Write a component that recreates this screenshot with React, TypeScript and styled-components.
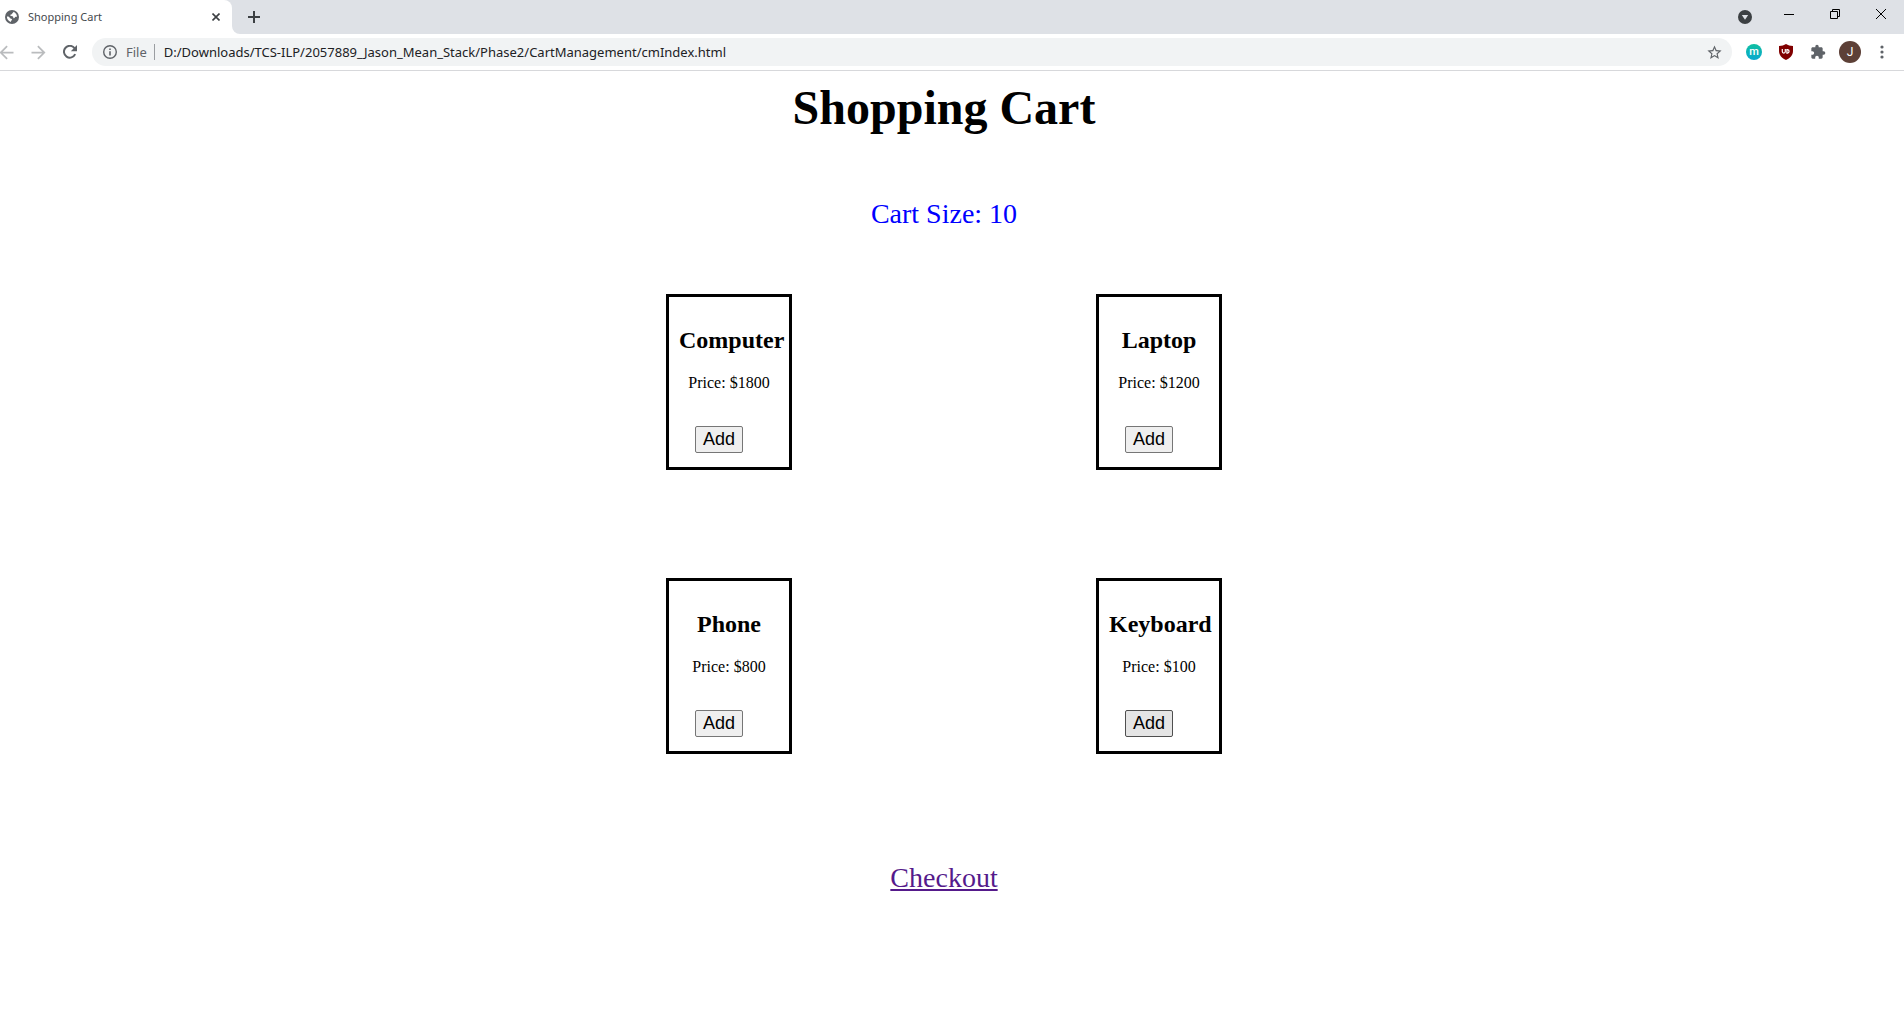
import React, { useState } from "react";
import styled, { createGlobalStyle } from "styled-components";
import { MdArrowBack, MdArrowForward, MdStarBorder, MdExtension } from "react-icons/md";

const GlobalStyle = createGlobalStyle`
  *, *::before, *::after { box-sizing: border-box; }
  body {
    margin: 0;
    background: #fff;
    color: #000;
    font-family: "Liberation Serif", "Times New Roman", serif;
    font-size: 16px;
    overflow-x: hidden;
  }
`;

const uiFont = `"Noto Sans", "Segoe UI", sans-serif`;

const Chrome = styled.header`
  font-family: ${uiFont};
  border-bottom: 1px solid #d7d8db;
  overflow: hidden;
`;

const TabStrip = styled.div`
  display: flex;
  height: 34px;
`;

const TabSlot = styled.div`
  width: 232px;
  background: #dee1e6;
`;

const Tab = styled.div`
  display: flex;
  align-items: center;
  height: 100%;
  padding: 0 8px 0 5px;
  background: #fff;
  border-top-right-radius: 8px;
  color: #45494d;
  font-size: 11px;
`;

const TabTitle = styled.span`
  flex: 1;
  padding: 0 0 1px 9px;
`;

const StripRest = styled.div`
  display: flex;
  flex: 1;
  padding-left: 6px;
  background: #dee1e6;
  border-bottom-left-radius: 8px;
`;

const WindowControls = styled.div`
  display: flex;
  margin-left: auto;
`;

const IconButton = styled.button<{ $w?: number; $h?: number; $color?: string }>`
  display: flex;
  flex: none;
  align-items: center;
  justify-content: center;
  width: ${(p) => p.$w ?? 32}px;
  height: ${(p) => p.$h ?? 36}px;
  padding: 0;
  border: 0;
  background: none;
  color: ${(p) => p.$color ?? "#5f6368"};
`;

const Toolbar = styled.div`
  display: flex;
  align-items: center;
  gap: 6px;
  height: 36px;
  padding-right: 6px;
`;

const ButtonGroup = styled.div<{ $bleed?: boolean }>`
  display: flex;
  margin-left: ${(p) => (p.$bleed ? "-10px" : "0")};
`;

const Omnibox = styled.div`
  display: flex;
  flex: 1;
  align-items: center;
  height: 28px;
  padding: 0 2px 0 11px;
  border-radius: 14px;
  background: #f1f3f4;
  color: #5f6368;
  font-size: 13px;
`;

const Scheme = styled.label`
  padding: 0 7px 0 9px;
  border-right: 1px solid #9a9da1;
  line-height: 16px;
`;

const Address = styled.input`
  flex: 1;
  min-width: 0;
  padding: 0 0 0 9px;
  border: 0;
  outline: 0;
  background: none;
  color: #202124;
  font: inherit;
`;

const Avatar = styled.span`
  display: flex;
  align-items: center;
  justify-content: center;
  width: 22px;
  height: 22px;
  border-radius: 50%;
  background: #5d4037;
  color: #fff;
  font: 12px Roboto, sans-serif;
`;

const MBadge = styled.span`
  display: flex;
  align-items: center;
  justify-content: center;
  width: 16px;
  height: 16px;
  border-radius: 50%;
  background: linear-gradient(#0fbfa0, #0aa9cf);
  color: #fff;
  font: 500 11px/14px Roboto, sans-serif;
`;

const Page = styled.main`
  display: flex;
  flex-direction: column;
  align-items: center;
  padding: 9px 24px 32px 8px;
`;

const Title = styled.h1`
  margin: 0 0 63px;
  font-size: 48px;
  line-height: 55px;
`;

const CartSize = styled.p`
  margin: 0 0 64px;
  color: #00f;
  font-size: 28px;
  line-height: 32px;
`;

const Products = styled.div`
  display: grid;
  grid-template-columns: auto auto;
  gap: 108px 304px;
  margin-bottom: 108px;
`;

const Card = styled.section`
  width: 126px;
  padding: 10px;
  border: 3px solid #000;
  text-align: center;
`;

const Name = styled.h2`
  margin: 20px 0;
  font-size: 24px;
  line-height: 27px;
`;

const Price = styled.p`
  margin: 0;
  line-height: 18px;
`;

const AddButton = styled.button<{ $active?: boolean }>`
  display: block;
  width: 48px;
  height: 27px;
  margin: 34px 0 4px 16px;
  padding: 0;
  border: 1px solid ${(p) => (p.$active ? "#4f4f4f" : "#767676")};
  border-radius: 2px;
  background: ${(p) => (p.$active ? "#e5e5e5" : "#efefef")};
  color: #000;
  font: 18px/21px "Liberation Sans", Arial, sans-serif;
`;

const Checkout = styled.a`
  color: #551a8b;
  font-size: 28px;
  line-height: 32px;
`;

const Globe = () => (
  <svg width="14" height="14" viewBox="0 0 14 14" aria-hidden="true">
    <circle cx="7" cy="7" r="7" fill="#5f6368" />
    <path
      d="M8.300 1.800C8.600 3 7.300 2.900 7.100 3.700C6.900 4.500 5.200 4.100 5.200 5.200C5.200 6.200 7.500 5.800 8 6.600C8.400 7.400 8 8.300 9 8.200C10.200 8 9.600 6.900 10.700 6.800H12C12 4.500 10.400 2.600 8.300 1.800ZM1.900 6.600C1.800 9 3.300 11.200 5.800 12C5.900 10.800 7 10.500 7 9.600C7 8.500 5.600 8.700 5 8.200C4.300 7.500 4.200 6.600 3.200 6.600Z"
      fill="#fff"
    />
  </svg>
);

const ReloadIcon = () => (
  <svg width="14" height="14" viewBox="0 0 14 14" fill="none" aria-hidden="true">
    <path d="M12.200 9.200A5.900 5.900 0 1 1 11.500 3.100" stroke="currentColor" strokeWidth="2" />
    <path d="M14 0V6.200H7.800z" fill="currentColor" />
  </svg>
);

const InfoIcon = () => (
  <svg width="14" height="14" viewBox="0 0 14 14" fill="none" aria-hidden="true">
    <circle cx="7" cy="7" r="6.300" stroke="currentColor" strokeWidth="1.400" />
    <path d="M7 6.200v4.300M7 3.500v1.500" stroke="currentColor" strokeWidth="1.600" />
  </svg>
);

const MenuIcon = () => (
  <svg width="4" height="14" viewBox="0 0 4 14" fill="currentColor" aria-hidden="true">
    <circle cx="2" cy="2" r="1.600" />
    <circle cx="2" cy="7" r="1.600" />
    <circle cx="2" cy="12" r="1.600" />
  </svg>
);

const CloseTabIcon = () => (
  <svg width="8" height="8" viewBox="0 0 8 8" aria-hidden="true">
    <path d="M.5.5l7 7M7.500.5l-7 7" stroke="#3c4043" strokeWidth="1.600" />
  </svg>
);

const PlusIcon = () => (
  <svg width="12" height="12" viewBox="0 0 12 12" aria-hidden="true">
    <path d="M6 0v12M0 6h12" stroke="#3c4043" strokeWidth="2" />
  </svg>
);

const SearchTabsIcon = () => (
  <svg width="14" height="14" viewBox="0 0 14 14" aria-hidden="true">
    <circle cx="7" cy="7" r="7" fill="#3c4043" />
    <path d="M3.800 5h6.400L7 9.800z" fill="#dee1e6" />
  </svg>
);

const MinimizeIcon = () => (
  <svg width="10" height="10" viewBox="0 0 10 10" aria-hidden="true">
    <path d="M0 5.500h10" stroke="#000" />
  </svg>
);

const RestoreIcon = () => (
  <svg width="10" height="10" viewBox="0 0 10 10" fill="none" stroke="#000" aria-hidden="true">
    <path d="M.5 2.500h7v7h-7zM2.500 2.500v-2h7v7h-2" />
  </svg>
);

const CloseIcon = () => (
  <svg width="10" height="10" viewBox="0 0 10 10" aria-hidden="true">
    <path d="M0 0l10 10M10 0L0 10" stroke="#000" />
  </svg>
);

const ShieldIcon = () => (
  <svg width="14" height="16" viewBox="0 0 14 16" fill="none" aria-hidden="true">
    <path d="M7 0C9 1.300 11 2 14 2V7C14 11.500 11 14.200 7 16C3 14.200 0 11.500 0 7V2C3 2 5 1.300 7 0Z" fill="#800000" />
    <path d="M3.300 5v2.600a1.500 1.500 0 0 0 3 0V5" stroke="#fff" strokeWidth="1.200" />
    <path d="M7.900 5.600h.8a1.800 1.800 0 0 1 0 3.500h-.8z" stroke="#fff" strokeWidth="1.200" />
  </svg>
);

const products = [
  { name: "Computer", price: 1800 },
  { name: "Laptop", price: 1200 },
  { name: "Phone", price: 800 },
  { name: "Keyboard", price: 100 },
];

export default function App() {
  const [count, setCount] = useState(10);
  const [active, setActive] = useState("Keyboard");

  const add = (name: string) => {
    setCount((c) => c + 1);
    setActive(name);
  };

  return (
    <>
      <GlobalStyle />
      <Chrome>
        <TabStrip>
          <TabSlot>
            <Tab>
              <Globe />
              <TabTitle>Shopping Cart</TabTitle>
              <IconButton $w={16} $h={16} aria-label="Close tab">
                <CloseTabIcon />
              </IconButton>
            </Tab>
          </TabSlot>
          <StripRest>
            <IconButton $h={34} aria-label="New tab">
              <PlusIcon />
            </IconButton>
            <WindowControls>
              <IconButton $w={42} $h={34} aria-label="Search tabs">
                <SearchTabsIcon />
              </IconButton>
              <IconButton $w={46} $h={28} aria-label="Minimize">
                <MinimizeIcon />
              </IconButton>
              <IconButton $w={46} $h={28} aria-label="Restore">
                <RestoreIcon />
              </IconButton>
              <IconButton $w={46} $h={28} aria-label="Close window">
                <CloseIcon />
              </IconButton>
            </WindowControls>
          </StripRest>
        </TabStrip>
        <Toolbar>
          <ButtonGroup $bleed>
            <IconButton $color="#babcbe" aria-label="Back">
              <MdArrowBack size={21} />
            </IconButton>
            <IconButton $color="#babcbe" aria-label="Forward">
              <MdArrowForward size={21} />
            </IconButton>
            <IconButton aria-label="Reload">
              <ReloadIcon />
            </IconButton>
          </ButtonGroup>
          <Omnibox>
            <InfoIcon />
            <Scheme htmlFor="address">File</Scheme>
            <Address
              id="address"
              spellCheck={false}
              defaultValue="D:/Downloads/TCS-ILP/2057889_Jason_Mean_Stack/Phase2/CartManagement/cmIndex.html"
            />
            <IconButton $h={28} aria-label="Bookmark this page">
              <MdStarBorder size={17} />
            </IconButton>
          </Omnibox>
          <ButtonGroup>
            <IconButton aria-label="Extension m">
              <MBadge>m</MBadge>
            </IconButton>
            <IconButton aria-label="Ad blocker">
              <ShieldIcon />
            </IconButton>
            <IconButton aria-label="Extensions">
              <MdExtension size={16} />
            </IconButton>
            <IconButton aria-label="Profile">
              <Avatar>J</Avatar>
            </IconButton>
            <IconButton aria-label="Menu">
              <MenuIcon />
            </IconButton>
          </ButtonGroup>
        </Toolbar>
      </Chrome>
      <Page>
        <Title>Shopping Cart</Title>
        <CartSize>Cart Size: {count}</CartSize>
        <Products>
          {products.map((p) => (
            <Card key={p.name}>
              <Name>{p.name}</Name>
              <Price>Price: ${p.price}</Price>
              <AddButton $active={active === p.name} onClick={() => add(p.name)}>
                Add
              </AddButton>
            </Card>
          ))}
        </Products>
        <Checkout href="#checkout">Checkout</Checkout>
      </Page>
    </>
  );
}
